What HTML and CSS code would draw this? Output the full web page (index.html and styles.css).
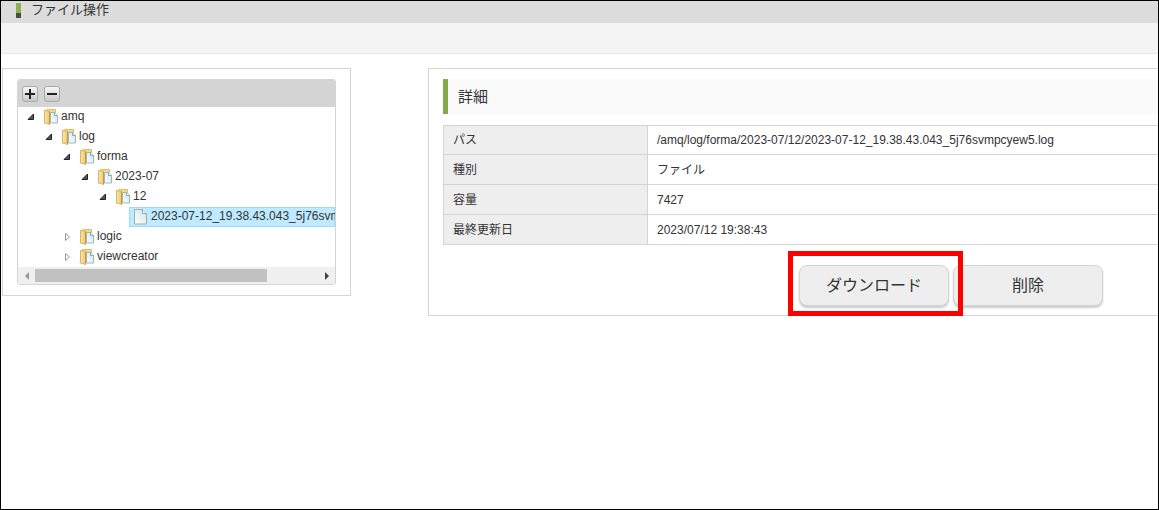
FILE: index.html
```html
<!DOCTYPE html>
<html lang="ja">
<head>
<meta charset="utf-8">
<title>ファイル操作</title>
<link rel="stylesheet" href="styles.css">
</head>
<body>
<svg class="defs" aria-hidden="true">
  <defs>
    <linearGradient id="gold" x1="0" x2="1" y1="0" y2="0">
      <stop offset="0" stop-color="#fbe7ae"/><stop offset="1" stop-color="#ecc96f"/>
    </linearGradient>
    <linearGradient id="sheet" x1="0" x2="1" y1="1" y2="0">
      <stop offset="0" stop-color="#ffffff"/><stop offset="1" stop-color="#d0e4ea"/>
    </linearGradient>
    <symbol id="folder" viewBox="0 0 16 18">
      <path d="M0 17h5v-3H2z" fill="#dcdcdc"/>
      <path d="M1.500 3.500 5 2.500h7.500v13H3z" fill="#f3d88f" stroke="#e0bd68"/>
      <path d="M1.500 3.500 6.500 4.500v13L1.500 15.500z" fill="url(#gold)" stroke="#dcb65f"/>
      <path d="M6.500 4.500v13" stroke="#c49a45"/>
      <path d="M7.500 5.500h4.500l2.500 3v7.500h-7z" fill="url(#sheet)" stroke="#9fb6ba"/>
      <path d="M11.500 5.500v3h3" fill="#eef8f9" stroke="#8ba5ab"/>
    </symbol>
    <symbol id="file" viewBox="0 0 16 18">
      <path d="M1.500 1.500h8l4 4v10.500h-12z" fill="url(#sheet)" stroke="#9ab0b5"/>
      <path d="M9.500 1.500v4h4" fill="#ffffff" stroke="#8ba2a8"/>
    </symbol>
    <symbol id="open" viewBox="0 0 8 8"><path d="M6.500 1v5.500H1z" fill="#555" stroke="#222"/></symbol>
    <symbol id="closed" viewBox="0 0 8 8"><path d="M2.500 0.500v7l4-3.500z" fill="#fff" stroke="#999"/></symbol>
  </defs>
</svg>
<div class="page">
  <header class="titlebar"><span class="marker"></span><h1>ファイル操作</h1></header>
  <div class="toolbar"></div>
  <main class="workspace">
    <section class="panel tree-panel">
      <div class="tree">
        <div class="tree-tools">
          <button class="tool" aria-label="すべて展開"><svg viewBox="0 0 14 14"><path d="M7 2v10M2 7h10" stroke="#222" stroke-width="2"/></svg></button>
          <button class="tool" aria-label="すべて折りたたむ"><svg viewBox="0 0 14 14"><path d="M2 7h10" stroke="#222" stroke-width="2"/></svg></button>
        </div>
        <div class="tree-view">
          <ul>
            <li><div class="node"><button class="toggle" aria-label="amq"><svg><use href="#open"/></svg></button><svg class="icon"><use href="#folder"/></svg><span>amq</span></div>
              <ul>
                <li><div class="node"><button class="toggle" aria-label="log"><svg><use href="#open"/></svg></button><svg class="icon"><use href="#folder"/></svg><span>log</span></div>
                  <ul>
                    <li><div class="node"><button class="toggle" aria-label="forma"><svg><use href="#open"/></svg></button><svg class="icon"><use href="#folder"/></svg><span>forma</span></div>
                      <ul>
                        <li><div class="node"><button class="toggle" aria-label="2023-07"><svg><use href="#open"/></svg></button><svg class="icon"><use href="#folder"/></svg><span>2023-07</span></div>
                          <ul>
                            <li><div class="node"><button class="toggle" aria-label="12"><svg><use href="#open"/></svg></button><svg class="icon"><use href="#folder"/></svg><span>12</span></div>
                              <ul>
                                <li class="leaf"><div class="node selected"><svg class="icon"><use href="#file"/></svg><span>2023-07-12_19.38.43.043_5j76svmpcyew5.log</span></div></li>
                              </ul>
                            </li>
                          </ul>
                        </li>
                      </ul>
                    </li>
                    <li><div class="node"><button class="toggle" aria-label="logic"><svg><use href="#closed"/></svg></button><svg class="icon"><use href="#folder"/></svg><span>logic</span></div></li>
                    <li><div class="node"><button class="toggle" aria-label="viewcreator"><svg><use href="#closed"/></svg></button><svg class="icon"><use href="#folder"/></svg><span>viewcreator</span></div></li>
                  </ul>
                </li>
              </ul>
            </li>
          </ul>
        </div>
        <div class="scrollbar">
          <button class="scroll-arrow" aria-label="左へスクロール"><svg viewBox="0 0 8 8"><path d="M6 0v8L2 4z" fill="#999"/></svg></button>
          <div class="track"><div class="thumb"></div></div>
          <button class="scroll-arrow" aria-label="右へスクロール"><svg viewBox="0 0 8 8"><path d="M2 0v8l4-4z" fill="#444"/></svg></button>
        </div>
      </div>
    </section>
    <section class="panel detail-panel">
      <h2>詳細</h2>
      <table>
        <tbody>
          <tr><th scope="row">パス</th><td>/amq/log/forma/2023-07/12/2023-07-12_19.38.43.043_5j76svmpcyew5.log</td></tr>
          <tr><th scope="row">種別</th><td>ファイル</td></tr>
          <tr><th scope="row">容量</th><td>7427</td></tr>
          <tr><th scope="row">最終更新日</th><td>2023/07/12 19:38:43</td></tr>
        </tbody>
      </table>
      <div class="actions">
        <div class="highlighted"><button class="action">ダウンロード</button></div>
        <button class="action">削除</button>
      </div>
    </section>
  </main>
</div>
</body>
</html>
```
FILE: styles.css
```css
* { box-sizing: border-box; }
body {
  margin: 0;
  color: #333;
  background: #fff;
  font: 12px/20px "Liberation Sans", "Noto Sans CJK JP", sans-serif;
}
button { padding: 0; border: 0; background: none; color: inherit; font: inherit; }
svg { display: block; }
ul { margin: 0; padding: 0; list-style: none; }
.defs { position: absolute; width: 0; height: 0; }

.page { min-height: 100vh; border: 1px solid #000; overflow: hidden; }
.titlebar {
  display: flex;
  align-items: center;
  gap: 10px;
  height: 22px;
  padding: 0 15px 4px;
  background: #dcdcdc;
}
.titlebar h1 { margin: 0; font-size: 13px; font-weight: 400; line-height: 18px; }
.marker { width: 5px; height: 15px; background: linear-gradient(#8ab24c 10px, #474f42 10px); }
.toolbar { height: 31px; background: #f4f4f4; border-bottom: 1px solid #e8e8e8; }

/* The detail pane runs on past the right edge of the window. */
.workspace {
  display: flex;
  align-items: flex-start;
  gap: 77px;
  margin-right: -316px;
  padding: 14px 0 0 1px;
}
.panel { border: 1px solid #d4d4d4; padding: 10px 14px; }
.tree-panel { flex: 0 0 349px; min-width: 0; }
.detail-panel { flex: 1; min-width: 0; padding-bottom: 9px; }

.tree { border: 1px solid #d4d4d4; border-radius: 3px; overflow: hidden; }
.tree-tools {
  display: flex;
  align-items: center;
  gap: 6px;
  height: 27px;
  padding: 1px 4px 0;
  background: #d4d4d4;
}
.tool {
  width: 16px;
  height: 16px;
  border: 1px solid #aaa;
  border-radius: 3px;
  background: linear-gradient(#f8f8f8, #c8c8c8);
}
.tool svg { width: 14px; height: 14px; }
.tree-view { overflow: hidden; padding-left: 3px; white-space: nowrap; }
.tree-view ul ul { padding-left: 18px; }
.node { display: flex; height: 20px; line-height: 18px; }
.toggle {
  display: flex;
  align-items: center;
  justify-content: center;
  width: 22px;
  padding-right: 2px;
}
.toggle svg { width: 8px; height: 8px; }
.icon { width: 16px; height: 18px; flex: none; margin-right: 2px; }
.leaf .node { padding-left: 3px; }
.leaf { padding-left: 18px; }
.selected { background: #bfeaff; border: 1px solid #9bdcfa; line-height: 16px; }

.scrollbar { display: flex; height: 17px; background: #f0f0f0; }
.scroll-arrow { display: grid; place-items: center; width: 17px; }
.scroll-arrow svg { width: 8px; height: 8px; }
.track { flex: 1; padding: 2px 0; }
.thumb { width: 82%; height: 13px; background: #c1c1c1; }

h2 {
  margin: 0 0 11px;
  padding: 0 10px;
  border-left: 5px solid #83aa4b;
  background: #fafafa;
  font-size: 15px;
  font-weight: 400;
  line-height: 35px;
}
table { width: 100%; border-collapse: collapse; }
th, td {
  height: 30px;
  padding: 0 9px;
  border: 1px solid #d4d4d4;
  font-weight: 400;
  line-height: 20px;
  text-align: left;
}
tr:first-child > * { height: 29px; }
th { width: 204px; background: #eee; }

.actions { display: flex; justify-content: center; gap: 4px; padding-top: 20px; }
.action {
  display: block;
  width: 150px;
  height: 41px;
  border: 1px solid #d4d4d4;
  border-radius: 8px;
  background: #eee;
  box-shadow: 0 2px 2px #ccc;
  font-size: 16px;
}
.highlighted { position: relative; z-index: 1; }
.highlighted::after {
  content: "";
  position: absolute;
  inset: -14px -14px -10px -11px;
  border: 5px solid #f00;
  pointer-events: none;
}
```
